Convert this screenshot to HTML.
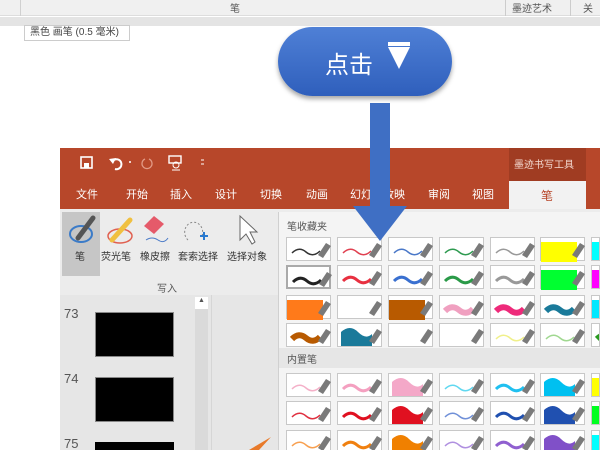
<!DOCTYPE html>
<html><head><meta charset="utf-8"><style>
*{margin:0;padding:0;box-sizing:border-box}
html,body{width:600px;height:450px;overflow:hidden}
body{background:#fff;position:relative;font-family:"Liberation Sans","Noto Sans CJK SC",sans-serif}
.a{position:absolute}
.t{position:absolute;font-size:11px;color:#fff;white-space:nowrap}
.c{position:absolute;width:45px;height:24px;background:#fff;border:1px solid #c8c8c8}
.c svg{position:absolute;left:0;top:0}
#clip{position:absolute;left:0;top:0;width:600px;height:450px;overflow:hidden}
</style></head><body>
<div id="clip">
<div class="a" style="left:0;top:0;width:600px;height:16px;background:#f0f0f0;border-bottom:1px solid #ddd"></div>
<div class="a" style="left:20px;top:0;width:1px;height:16px;background:#d0d0d0"></div>
<div class="t" style="left:230px;top:0;color:#555;font-size:10px">笔</div>
<div class="a" style="left:505px;top:0;width:1px;height:16px;background:#ccc"></div>
<div class="t" style="left:512px;top:0;color:#555;font-size:10px">墨迹艺术</div>
<div class="a" style="left:570px;top:0;width:1px;height:16px;background:#ccc"></div>
<div class="t" style="left:583px;top:0;color:#555;font-size:10px">关</div>
<div class="a" style="left:0;top:17px;width:600px;height:9px;background:#e4e4e4"></div>
<div class="a" style="left:24px;top:25px;width:106px;height:16px;background:#fff;border:1px solid #ccc;font-size:10px;color:#444;padding-left:5px;line-height:14px">黑色 画笔 (0.5 毫米)</div>

<div class="a" style="left:60px;top:148px;width:540px;height:61px;background:#b7472a"></div>
<div class="a" style="left:509px;top:148px;width:77px;height:33px;background:#a03c22"></div>
<div class="t" style="left:514px;top:156px;color:#f3d9d0;font-size:10px">墨迹书写工具</div>
<div class="a" style="left:509px;top:181px;width:77px;height:28px;background:#f2f2f2"></div>
<div class="t" style="left:541px;top:187px;color:#b7472a;font-size:12px">笔</div>
<svg class="a" style="left:60px;top:148px" width="160" height="30">
<rect x="21" y="9" width="11" height="11" fill="none" stroke="#fff" stroke-width="1.6"/><rect x="24" y="15" width="5" height="5" fill="#fff"/>
<path d="M52 14 a5 5 0 1 1 3 7" fill="none" stroke="#fff" stroke-width="2"/><path d="M49 11 L53 16 L56 10Z" fill="#fff"/>
<circle cx="70" cy="14" r="1" fill="#fff"/>
<path d="M85 11 a5 5 0 1 0 4 0" fill="none" stroke="#e29a86" stroke-width="1.3"/>
<rect x="109" y="8" width="12" height="7" fill="none" stroke="#fff" stroke-width="1.4"/><circle cx="116" cy="17" r="3" fill="none" stroke="#fff"/><path d="M112 22 h8" stroke="#fff"/>
<path d="M141 12 h3 M141 16 h3" stroke="#fff"/>
</svg>
<div class="t" style="left:76px;top:186px">文件</div>
<div class="t" style="left:126px;top:186px">开始</div>
<div class="t" style="left:170px;top:186px">插入</div>
<div class="t" style="left:215px;top:186px">设计</div>
<div class="t" style="left:260px;top:186px">切换</div>
<div class="t" style="left:306px;top:186px">动画</div>
<div class="t" style="left:350px;top:186px">幻灯片放映</div>
<div class="t" style="left:428px;top:186px">审阅</div>
<div class="t" style="left:472px;top:186px">视图</div>

<div class="a" style="left:60px;top:209px;width:540px;height:86px;background:#ececec"></div>
<div class="a" style="left:62px;top:212px;width:38px;height:64px;background:#c6c6c6"></div>
<svg class="a" style="left:60px;top:212px" width="220" height="50">
<ellipse cx="21" cy="22" rx="11" ry="8" fill="none" stroke="#3b7bc8" stroke-width="2"/>
<path d="M18 26 L33 6" stroke="#555" stroke-width="5" stroke-linecap="round"/>
<ellipse cx="60" cy="24" rx="12" ry="7" fill="none" stroke="#e06050" stroke-width="1.5"/>
<path d="M52 28 L70 8" stroke="#f0c040" stroke-width="5" stroke-linecap="round"/>
<path d="M84 14 L94 4 L104 12 L94 22Z" fill="#e55a6a"/>
<path d="M86 28 q6 -4 12 0 t10 -2" stroke="#4b7bc8" fill="none"/>
<path d="M128 28 a9 10 0 1 1 14 -4" fill="none" stroke="#888" stroke-dasharray="2 2"/>
<path d="M140 24 h8 M144 20 v8" stroke="#2a7ad0" stroke-width="2"/>
<path d="M180 4 L180 28 L186 22 L192 32 L195 30 L190 20 L197 20Z" fill="#fff" stroke="#666"/>
</svg>
<div class="t" style="left:75px;top:248px;color:#333;font-size:10px">笔</div>
<div class="t" style="left:101px;top:248px;color:#333;font-size:10px">荧光笔</div>
<div class="t" style="left:140px;top:248px;color:#333;font-size:10px">橡皮擦</div>
<div class="t" style="left:178px;top:248px;color:#333;font-size:10px">套索选择</div>
<div class="t" style="left:227px;top:248px;color:#333;font-size:10px">选择对象</div>
<div class="t" style="left:157px;top:280px;color:#555;font-size:10px">写入</div>

<div class="a" style="left:60px;top:295px;width:218px;height:155px;background:#e6e6e6"></div>
<div class="a" style="left:195px;top:297px;width:13px;height:153px;background:#dadada"></div>
<div class="a" style="left:195px;top:297px;width:13px;height:12px;background:#fff;font-size:7px;color:#555;text-align:center">▲</div>
<div class="a" style="left:211px;top:295px;width:1px;height:155px;background:#d6d6d6"></div>
<div class="t" style="left:64px;top:306px;color:#555;font-size:13px">73</div>
<div class="a" style="left:95px;top:312px;width:79px;height:45px;background:#000;border:1px solid #888"></div>
<div class="t" style="left:64px;top:371px;color:#555;font-size:13px">74</div>
<div class="a" style="left:95px;top:377px;width:79px;height:45px;background:#000;border:1px solid #888"></div>
<div class="t" style="left:64px;top:436px;color:#555;font-size:13px">75</div>
<div class="a" style="left:95px;top:442px;width:79px;height:8px;background:#000"></div>
<svg class="a" style="left:245px;top:435px" width="30" height="15"><path d="M4 15 L26 2 L14 15Z" fill="#e87a2a"/></svg>

<div class="a" style="left:278px;top:212px;width:322px;height:238px;background:#f4f4f4;border-left:1px solid #d0d0d0"></div>
<div class="t" style="left:287px;top:218px;color:#555;font-size:10px">笔收藏夹</div>
<div class="a" style="left:279px;top:348px;width:321px;height:20px;background:#e6e6e6"></div>
<div class="t" style="left:287px;top:351px;color:#555;font-size:10px">内置笔</div>

<div id="g"></div>

<svg class="a" style="left:0;top:0" width="600" height="450">
<rect x="370" y="103" width="20" height="106" fill="#3f6fc4"/>
<path d="M353 206 L407 206 L380 241Z" fill="#3f6fc4"/>
</svg>
<div class="a" style="left:278px;top:27px;width:174px;height:69px;border-radius:35px;background:linear-gradient(#4f80d6,#2f5fbc);box-shadow:0 3px 5px rgba(0,0,0,.35)"></div>
<div class="t" style="left:325px;top:45px;font-size:24px;color:#fff">点击</div>
<div class="a" style="left:388px;top:42px;width:22px;height:4px;background:#fff"></div>
<svg class="a" style="left:387px;top:47px" width="24" height="24"><path d="M1 0 H23 L12 22Z" fill="#fff"/></svg>
</div>
<script>
var xs=[286,337,388,439,490,540,591],ys=[237,265,295,323,373,401,430];
var R=[
[['t','#333'],['t','#e04050'],['t','#4a78c8'],['t','#2e9a50'],['t','#999'],['h','#ffff00'],['h','#00ffff']],
[['m','#222'],['m','#e83040'],['m','#3a70d0'],['m','#2a9a48'],['m','#999'],['h','#00ff30'],['h','#ff00ff']],
[['h','#ff7a1a'],['e',''],['h','#b85a00'],['k','#f0a0c0'],['k','#ee2a7a'],['k','#1a7a9a'],['h','#00e8ff']],
[['k','#b85a00'],['b','#1a7a9a'],['e',''],['e',''],['t','#f0f08a'],['t','#a0d890'],['k','#2a9a20']],
[['t','#f4b0c8'],['m','#f4a0c0'],['b','#f4a8c8'],['t','#60d8f0'],['m','#20c0f0'],['b','#00c0f0'],['h','#ffff00']],
[['t','#e03040'],['m','#e01020'],['b','#e01020'],['t','#7090d8'],['m','#2050b0'],['b','#2050b0'],['h','#00ff20']],
[['t','#f8a050'],['m','#f08010'],['b','#f08000'],['t','#b090e0'],['m','#9060d0'],['b','#8050c8'],['h','#00ffff']]
];
var h='';
for(var r=0;r<7;r++)for(var c=0;c<7;c++){var d=R[r][c],s='';
var W={t:1.5,m:3,k:6}[d[0]];
if(W)s='<path d="M5 15 Q12 8 19 14 T33 13" fill="none" stroke="'+d[1]+'" stroke-width="'+W+'"/>';
if(d[0]=='b')s='<path d="M3 8 Q12 0 20 8 T34 10 V22 H3Z" fill="'+d[1]+'"/>';
if(d[0]=='h')s='<rect x="0" y="4" width="36" height="20" fill="'+d[1]+'"/>';
var bd=(r==1&&c==0)?'border:2px solid #aaa;':'';
var w=(c==6)?'width:9px;overflow:hidden;':'';
h+='<div class="c" style="left:'+xs[c]+'px;top:'+ys[r]+'px;'+bd+w+'"><svg width="45" height="24">'+s+'<path d="M31 17 L39 5 L44 8 L36 20Z" fill="#7a7a7a"/></svg></div>';}
document.getElementById('g').innerHTML=h;
</script>
</body></html>
